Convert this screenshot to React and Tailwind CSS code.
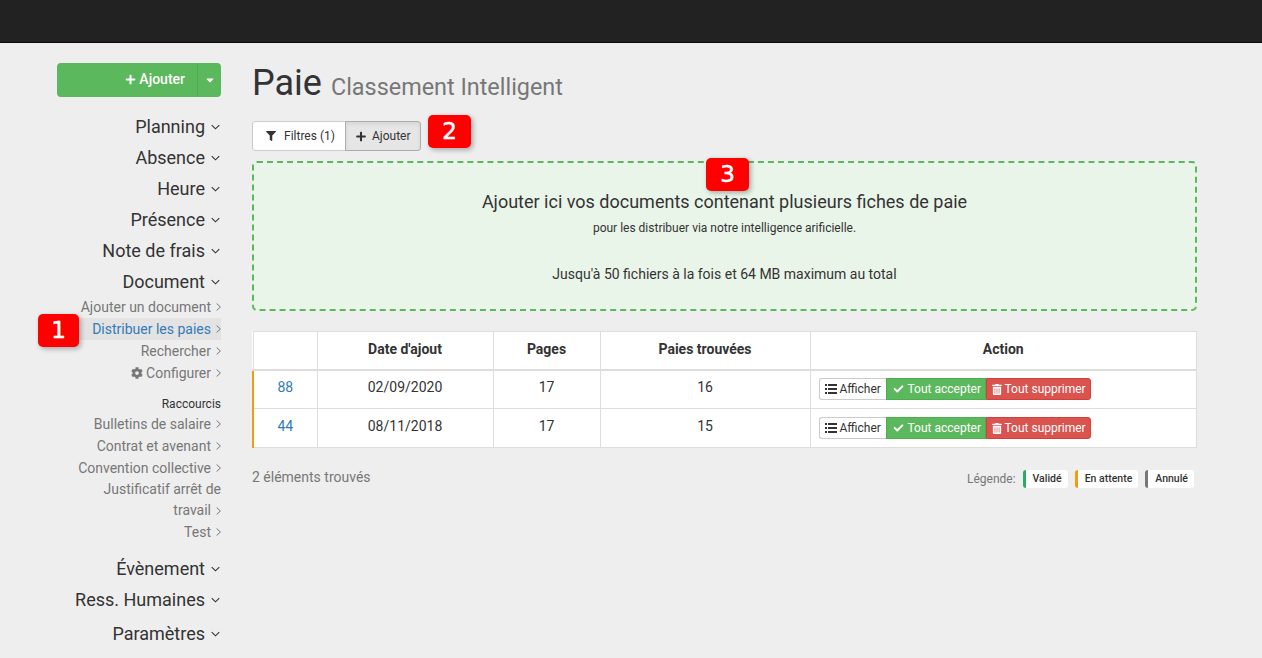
import React from "react";
import { FaPlus, FaCaretDown, FaCog, FaFilter, FaCheck, FaTrashAlt } from "react-icons/fa";

const mainMenu = ["Planning", "Absence", "Heure", "Présence", "Note de frais", "Document"];
const shortcuts = ["Bulletins de salaire", "Contrat et avenant", "Convention collective"];
const rows = [
  { id: 88, date: "02/09/2020", pages: 17, found: 16 },
  { id: 44, date: "08/11/2018", pages: 17, found: 15 }
];

const Badge = ({ label, className }) => (
  <div
    className={`absolute z-10 flex h-[33px] w-[43px] items-center justify-center rounded-[5px] bg-[#ff0000] font-['DejaVu_Sans',sans-serif] text-[23px] leading-none text-white shadow-[2px_2px_5px_rgba(0,0,0,0.3)] [-webkit-text-stroke:0.5px_white] ${className}`}
  >
    {label}
  </div>
);

const AngleDown = () => (
  <svg viewBox="0 0 10 6" className="ml-[6px] mr-px h-[6px] w-[9px] shrink-0 text-[#333]" fill="none" stroke="currentColor" strokeWidth="1.2">
    <path d="M0.8 0.8 L5 5 L9.2 0.8" />
  </svg>
);

const AngleRight = () => (
  <svg viewBox="0 0 5 8" className="ml-[5px] h-[8px] w-[5px] shrink-0 text-[#777]" fill="none" stroke="currentColor" strokeWidth="1">
    <path d="M0.6 0.5 L4.4 4 L0.6 7.5" />
  </svg>
);

const ListIcon = () => (
  <svg viewBox="0 0 12 10" className="h-[10px] w-[12px] shrink-0" fill="currentColor">
    <rect x="0" y="0" width="2" height="2" />
    <rect x="3" y="0" width="9" height="2" />
    <rect x="0" y="4" width="2" height="2" />
    <rect x="3" y="4" width="9" height="2" />
    <rect x="0" y="8" width="2" height="2" />
    <rect x="3" y="8" width="9" height="2" />
  </svg>
);

const MenuItem = ({ label, className = "h-[31px]" }) => (
  <a className={`flex items-center justify-end text-[18px] text-[#333] ${className}`}>
    {label}
    <AngleDown />
  </a>
);

const SubItem = ({ children, active }) => (
  <a
    className={`flex h-[22px] items-center justify-end text-[14px] ${
      active ? "ml-[60px] bg-[#e3e3e3] text-[#337ab7]" : "text-[#777]"
    }`}
  >
    {children}
    <AngleRight />
  </a>
);

const Sidebar = () => (
  <aside className="relative w-[221px] shrink-0 pt-[20px] text-right">
    <div className="ml-[57px] flex h-[34px] rounded-[4px] bg-[#5cb85c] text-[14px] text-white">
      <span className="flex flex-1 items-center justify-end gap-[3px] pb-[2px] pr-[12px] font-medium">
        <FaPlus className="h-[11px] w-[11px]" />
        Ajouter
      </span>
      <span className="flex w-[24px] items-center justify-center border-l border-[#4cae4c]">
        <FaCaretDown className="h-[12px] w-[12px]" />
      </span>
    </div>

    <nav className="mt-[14px]">
      {mainMenu.map((label) => (
        <MenuItem key={label} label={label} />
      ))}
      <div className="-mt-px">
        <SubItem>Ajouter un document</SubItem>
        <SubItem active>Distribuer les paies</SubItem>
        <SubItem>Rechercher</SubItem>
        <SubItem>
          <FaCog className="mr-[3px] h-[12px] w-[12px]" />
          Configurer
        </SubItem>
      </div>
      <div className="mt-[10px] flex h-[19px] items-center justify-end text-[12px] text-[#333]">Raccourcis</div>
      {shortcuts.map((label) => (
        <SubItem key={label}>{label}</SubItem>
      ))}
      <div className="text-[14px] leading-[21px] text-[#777]">Justificatif arrêt de</div>
      <div className="flex h-[21px] items-center justify-end text-[14px] text-[#777]">
        travail
        <AngleRight />
      </div>
      <SubItem>Test</SubItem>
      <div className="mt-[10px]">
        <MenuItem label="Évènement" />
        <MenuItem label="Ress. Humaines" />
        <MenuItem label="Paramètres" className="mt-[3px] h-[31px]" />
      </div>
    </nav>
    <Badge label="1" className="left-[38px] top-[271px] !w-[41px]" />
  </aside>
);

const PayTable = () => (
  <table className="w-full table-fixed border-collapse bg-white text-[14px] text-[#333]">
    <colgroup>
      <col className="w-[64px]" />
      <col className="w-[176px]" />
      <col className="w-[107px]" />
      <col className="w-[210px]" />
      <col />
    </colgroup>
    <thead>
      <tr className="h-[38px] border-b-2 border-[#ddd]">
        <th className="border border-b-2 border-[#ddd]"></th>
        <th className="border border-b-2 border-[#ddd] pb-[2px] font-bold">Date d'ajout</th>
        <th className="border border-b-2 border-[#ddd] pb-[2px] font-bold">Pages</th>
        <th className="border border-b-2 border-[#ddd] pb-[2px] font-bold">Paies trouvées</th>
        <th className="border border-b-2 border-[#ddd] pb-[2px] font-bold">Action</th>
      </tr>
    </thead>
    <tbody>
      {rows.map((row) => (
        <tr key={row.id} className="h-[39px] text-center">
          <td className="border border-l-2 border-[#ddd] border-l-[#f39c12] pb-[3px] text-[#337ab7]">{row.id}</td>
          <td className="border border-[#ddd] pb-[3px]">{row.date}</td>
          <td className="border border-[#ddd] pb-[3px]">{row.pages}</td>
          <td className="border border-[#ddd] pb-[3px]">{row.found}</td>
          <td className="border border-[#ddd] pl-[8px]">
            <div className="flex h-[22px] text-[12px]">
              <span className="flex w-[67px] items-center gap-[3px] rounded-l-[3px] border border-r-0 border-[#ccc] pl-[5px] text-[#333]">
                <ListIcon />
                Afficher
              </span>
              <span className="flex w-[100px] items-center gap-[4px] border border-[#4cae4c] bg-[#5cb85c] pl-[6px] text-white">
                <FaCheck className="h-[10px] w-[11px]" />
                Tout accepter
              </span>
              <span className="flex w-[105px] items-center gap-[3px] rounded-r-[3px] border border-[#d43f3a] bg-[#d9534f] pl-[5px] text-white">
                <FaTrashAlt className="h-[11px] w-[10px]" />
                Tout supprimer
              </span>
            </div>
          </td>
        </tr>
      ))}
    </tbody>
  </table>
);

const LegendTag = ({ label, color }) => (
  <span className={`flex h-[18px] items-center rounded-[3px] border-l-[3px] bg-white pl-[7px] pr-[6px] text-[10.5px] font-medium text-[#333] ${color}`}>
    {label}
  </span>
);

export default function App() {
  return (
    <div className="min-h-[658px] overflow-hidden bg-[#eeeeee] font-['Roboto',sans-serif]">
      <header className="h-[43px] border-b border-[#080808] bg-[#222222]" />
      <div className="flex">
        <Sidebar />
        <main className="relative ml-[31px] w-[945px]">
          <h1 className="mt-[18px] flex h-[44px] items-baseline text-[36px] leading-[44px] text-[#333]">
            Paie
            <small className="ml-[9px] text-[23.4px] text-[#777]">Classement Intelligent</small>
          </h1>
          <div className="mt-[16px] flex h-[30px] text-[12px] text-[#333]">
            <span className="flex w-[94px] items-center rounded-l-[3px] border border-[#ccc] bg-white pl-[13px]">
              <FaFilter className="mr-[8px] h-[10px] w-[10px]" />
              Filtres (1)
            </span>
            <span className="-ml-px flex w-[76px] items-center rounded-r-[3px] border border-[#adadad] bg-[#e6e6e6] pl-[10px] shadow-[inset_0_2px_4px_rgba(0,0,0,0.08)]">
              <FaPlus className="mr-[6px] h-[11px] w-[10px]" />
              Ajouter
            </span>
          </div>
          <Badge label="2" className="left-[176px] top-[72px]" />
          <Badge label="3" className="left-[454px] top-[115px]" />
          <section className="mt-[10px] flex h-[150px] flex-col items-center rounded-[5px] border-2 border-dashed border-[#5cb85c] bg-[#eaf5ea] text-center text-[#333]">
            <p className="mt-[26px] text-[18px] leading-[26px]">Ajouter ici vos documents contenant plusieurs fiches de paie</p>
            <p className="mt-[5px] text-[12px] leading-[17px]">pour les distribuer via notre intelligence arificielle.</p>
            <p className="mt-[27px] text-[14px] leading-[20px]">Jusqu'à 50 fichiers à la fois et 64 MB maximum au total</p>
          </section>
          <div className="mt-[20px]">
            <PayTable />
          </div>
          <div className="mt-[19px] flex items-center justify-between text-[14px] text-[#777]">
            <span className="pb-[2px]">2 éléments trouvés</span>
            <div className="flex items-center gap-[7px] pr-[3px]">
              <span className="text-[12px]">Légende:</span>
              <LegendTag label="Validé" color="border-[#27ae60]" />
              <LegendTag label="En attente" color="border-[#f39c12]" />
              <LegendTag label="Annulé" color="border-[#777]" />
            </div>
          </div>
        </main>
      </div>
    </div>
  );
}
